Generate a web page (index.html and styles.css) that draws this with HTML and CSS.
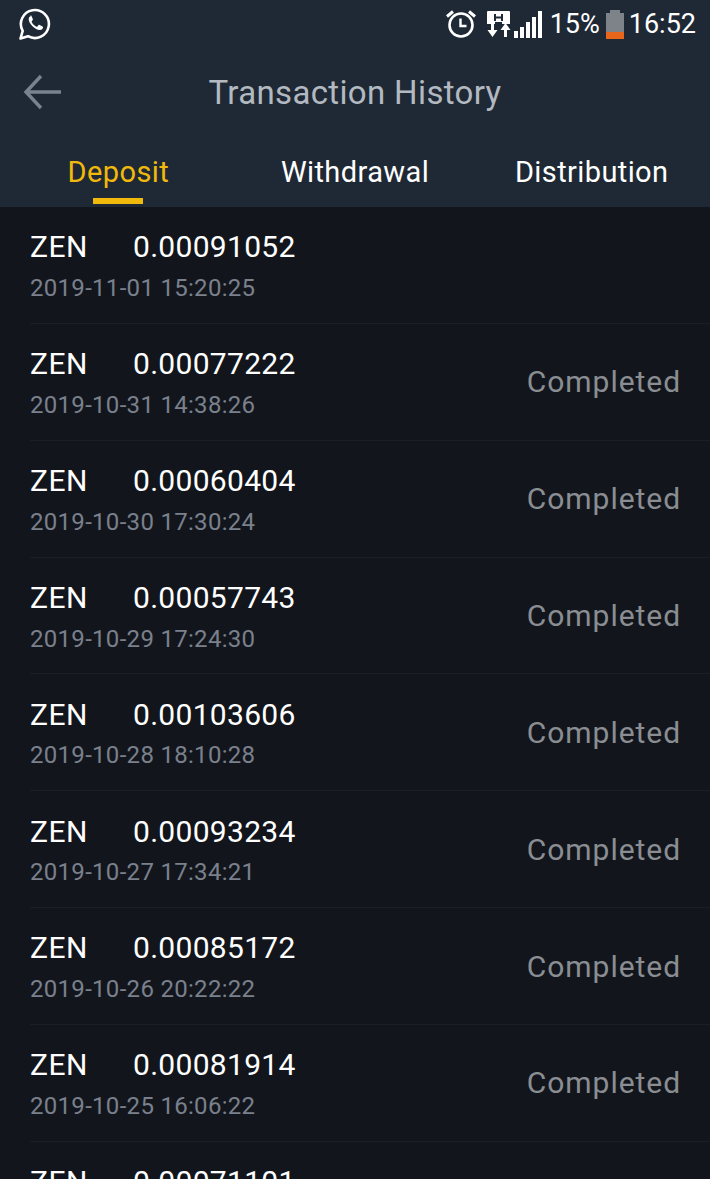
FILE: index.html
```html
<!DOCTYPE html>
<html lang="en">
<head>
    <meta charset="UTF-8">
    <meta name="viewport" content="width=device-width, initial-scale=1.0">
    <title>Transaction History</title>
    <link rel="stylesheet" href="styles.css">
</head>
<body>
    <div id="app">
        <div id="top">
            <!-- Status bar -->
            <div class="status-bar">
                <svg class="whatsapp" width="34" height="34" viewBox="0 0 34 34">
                    <path d="M2.5 31.5l2.2-7.6A14 14 0 1 1 10 29.2z" fill="none" stroke="#fff" stroke-width="2.6" stroke-linejoin="round"/>
                    <path d="M12.6 9.3c-.6 0-1.9.8-1.9 3 0 2.4 1.6 4.8 3.8 6.9 2.300 2.200 5 3.700 7.200 3.700 2.200 0 3.300-1.500 3.300-2.500 0-.5-.1-.8-.4-1l-3-1.500c-.4-.2-.7-.1-1 .2l-1.200 1.500c-.3.300-.6.300-1 .1-2-1-3.700-2.600-4.700-4.600-.2-.4-.1-.6.100-.9l.9-1.100c.2-.3.300-.6.100-1l-1.300-3.100c-.2-.5-.5-.7-1-.7z" fill="#fff"/>
                </svg>
                <div class="status-right">
                    <svg class="alarm" width="32" height="30" viewBox="0 0 32 30">
                        <circle cx="16" cy="16" r="11.500" fill="none" stroke="#fff" stroke-width="2.600"/>
                        <path d="M15.500 9.500v7.500h6" fill="none" stroke="#fff" stroke-width="2.400"/>
                        <path d="M2 7.500L8 2.500M30 7.500L24 2.500" stroke="#fff" stroke-width="3" fill="none"/>
                    </svg>
                    <svg class="net" width="24" height="28" viewBox="0 0 24 28">
                        <path d="M0 2a1 1 0 0 1 1-1h21a1 1 0 0 1 1 1v12h-8v-2H8v2H0z" fill="#fff"/>
                        <path d="M8 4v7M15 4v7M8 7.500h7" stroke="#1f2935" stroke-width="2" fill="none"/>
                        <path d="M4 13h3v7h3.500L5.500 27 .5 20H4zM17 27h3v-7h3.500l-5-7-5 7H17z" fill="#fff"/>
                    </svg>
                    <div class="signal">
                        <span class="bar-1"></span>
                        <span class="bar-2"></span>
                        <span class="bar-3"></span>
                        <span class="bar-4"></span>
                        <span class="bar-5"></span>
                    </div>
                    <span class="pct">15%</span>
                    <div class="battery">
                        <div class="battery-cap"></div>
                        <div class="battery-body"><div class="battery-level"></div></div>
                    </div>
                    <span class="clock">16:52</span>
                </div>
            </div>

            <!-- Title -->
            <div class="title-bar">
                <svg class="back" width="40" height="36" viewBox="0 0 40 36">
                    <path d="M38 18H3M18 2L3 18l15 16" fill="none" stroke="#78838f" stroke-width="3.400"/>
                </svg>
                <h1>Transaction History</h1>
            </div>

            <!-- Tabs -->
            <div class="tabs">
                <div class="tab active">Deposit</div>
                <div class="tab">Withdrawal</div>
                <div class="tab">Distribution</div>
            </div>
        </div>

        <div id="list">
            <div class="row">
                <div>
                    <div class="line"><span class="coin">ZEN</span><span class="amount">0.00091052</span></div>
                    <div class="date">2019-11-01 15:20:25</div>
                </div>
            </div>
            <div class="row">
                <div>
                    <div class="line"><span class="coin">ZEN</span><span class="amount">0.00077222</span></div>
                    <div class="date">2019-10-31 14:38:26</div>
                </div>
                <div class="state">Completed</div>
            </div>
            <div class="row">
                <div>
                    <div class="line"><span class="coin">ZEN</span><span class="amount">0.00060404</span></div>
                    <div class="date">2019-10-30 17:30:24</div>
                </div>
                <div class="state">Completed</div>
            </div>
            <div class="row">
                <div>
                    <div class="line"><span class="coin">ZEN</span><span class="amount">0.00057743</span></div>
                    <div class="date">2019-10-29 17:24:30</div>
                </div>
                <div class="state">Completed</div>
            </div>
            <div class="row">
                <div>
                    <div class="line"><span class="coin">ZEN</span><span class="amount">0.00103606</span></div>
                    <div class="date">2019-10-28 18:10:28</div>
                </div>
                <div class="state">Completed</div>
            </div>
            <div class="row">
                <div>
                    <div class="line"><span class="coin">ZEN</span><span class="amount">0.00093234</span></div>
                    <div class="date">2019-10-27 17:34:21</div>
                </div>
                <div class="state">Completed</div>
            </div>
            <div class="row">
                <div>
                    <div class="line"><span class="coin">ZEN</span><span class="amount">0.00085172</span></div>
                    <div class="date">2019-10-26 20:22:22</div>
                </div>
                <div class="state">Completed</div>
            </div>
            <div class="row">
                <div>
                    <div class="line"><span class="coin">ZEN</span><span class="amount">0.00081914</span></div>
                    <div class="date">2019-10-25 16:06:22</div>
                </div>
                <div class="state">Completed</div>
            </div>
            <div class="row">
                <div>
                    <div class="line"><span class="coin">ZEN</span><span class="amount">0.00071101</span></div>
                    <div class="date">2019-10-24 16:06:22</div>
                </div>
                <div class="state">Completed</div>
            </div>
        </div>
    </div>
</body>
</html>
```
FILE: styles.css
```css
html, body {
    margin: 0;
    padding: 0;
    height: 100%;
    overflow: hidden;
    background-color: #12161c;
    font-family: Roboto, "Liberation Sans", sans-serif;
}

#app {
    width: 710px;
    height: 1179px;
    overflow: hidden;
}

#top {
    background-color: #1f2935;
    height: 207px;
}

/* Status bar */
.status-bar {
    height: 48px;
    display: flex;
    justify-content: space-between;
    align-items: center;
    padding: 0 14px 0 18px;
    color: #fff;
}

.status-right {
    display: flex;
    align-items: center;
    gap: 7px;
    font-size: 27px;
}

.alarm {
    margin-right: 3px;
}

.net {
    margin-right: -4px;
}

.signal {
    display: flex;
    align-items: flex-end;
    gap: 2px;
    height: 27px;
}

.signal span {
    width: 4px;
    background: #fff;
}

.bar-1 { height: 7px; }
.bar-2 { height: 11px; }
.bar-3 { height: 16px; }
.bar-4 { height: 21px; }
.bar-5 { height: 27px; }

.pct {
    margin-left: 1px;
}

.battery {
    width: 18px;
    margin-left: -1px;
}

.battery-cap {
    width: 10px;
    height: 3px;
    margin: 0 auto;
    background: #7e838a;
}

.battery-body {
    height: 26px;
    background: #7e838a;
    display: flex;
    align-items: flex-end;
}

.battery-level {
    width: 100%;
    height: 7px;
    background: #e8661c;
}

.clock {
    margin-left: -2px;
}

/* Title */
.title-bar {
    height: 88px;
    position: relative;
    display: flex;
    align-items: center;
    justify-content: center;
}

.back {
    position: absolute;
    left: 23px;
    top: 26px;
}

h1 {
    margin: 0;
    font-size: 33px;
    font-weight: 400;
    letter-spacing: 0.35px;
    color: #b3b9c0;
}

/* Tabs */
.tabs {
    height: 71px;
    display: flex;
}

.tab {
    flex: 1;
    text-align: center;
    font-size: 29px;
    line-height: 72px;
    letter-spacing: 0.4px;
    color: #fff;
    position: relative;
}

.tab.active {
    color: #f0b90b;
}

.tab.active::after {
    content: "";
    position: absolute;
    left: 50%;
    bottom: 3px;
    width: 50px;
    height: 6px;
    margin-left: -25px;
    background: #f0b90b;
}

/* List */
.row {
    height: 116.85px;
    box-sizing: border-box;
    margin-left: 30px;
    padding: 21.4px 29px 0 0;
    border-bottom: 1px solid #1a1e25;
    display: flex;
    justify-content: space-between;
    align-items: flex-start;
}

.line {
    display: flex;
    height: 38px;
    line-height: 38px;
    font-size: 30px;
    letter-spacing: 0.5px;
    color: #fff;
}

.coin {
    width: 103px;
}

.amount {
    letter-spacing: 0.3px;
}

.date {
    margin-top: 6.6px;
    font-size: 24px;
    line-height: 30px;
    letter-spacing: 0.3px;
    color: #7a808c;
}

.state {
    margin-top: 18.2px;
    font-size: 30px;
    line-height: 38px;
    letter-spacing: 0.95px;
    color: #8a8e93;
}
```
